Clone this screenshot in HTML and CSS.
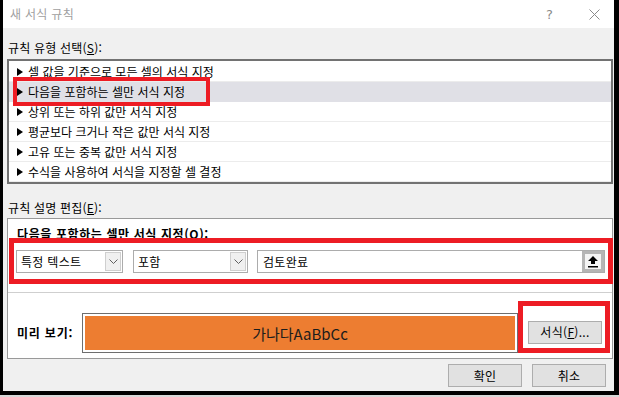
FILE: index.html
```html
<!DOCTYPE html>
<html lang="ko">
  <head>
    <meta charset="UTF-8" />
    <title>새 서식 규칙</title>
    <link rel="stylesheet" href="styles.css">
  </head>
  <body>
    <div class="dialog">
      <div class="titlebar">
        <span class="title">새 서식 규칙</span>
        <span class="help">?</span>
        <svg class="close" width="11" height="11" viewBox="0 0 11 11">
          <path d="M0.5 0.5 L10.5 10.5 M10.5 0.5 L0.5 10.5" stroke="#8a8a8a" stroke-width="1" fill="none" />
        </svg>
      </div>

      <div class="label first">규칙 유형 선택(<u>S</u>):</div>
      <ul class="rules">
        <li>셀 값을 기준으로 모든 셀의 서식 지정</li>
        <li class="selected">다음을 포함하는 셀만 서식 지정</li>
        <li>상위 또는 하위 값만 서식 지정</li>
        <li>평균보다 크거나 작은 값만 서식 지정</li>
        <li>고유 또는 중복 값만 서식 지정</li>
        <li>수식을 사용하여 서식을 지정할 셀 결정</li>
      </ul>

      <div class="label second">규칙 설명 편집(<u>E</u>):</div>
      <div class="panel">
        <div class="panel-title">다음을 포함하는 셀만 서식 지정(<u>O</u>):</div>
        <div class="controls">
          <div class="combo combo-type">
            <span class="combo-text">특정 텍스트</span>
            <span class="drop">
              <svg width="9" height="5" viewBox="0 0 9 5"><path d="M0.5 0.5 L4.5 4.5 L8.5 0.5" stroke="#606060" fill="none" /></svg>
            </span>
          </div>
          <div class="combo combo-op">
            <span class="combo-text">포함</span>
            <span class="drop">
              <svg width="9" height="5" viewBox="0 0 9 5"><path d="M0.5 0.5 L4.5 4.5 L8.5 0.5" stroke="#606060" fill="none" /></svg>
            </span>
          </div>
          <div class="textbox">
            <span class="combo-text">검토완료</span>
            <span class="pick">
              <svg width="12" height="12" viewBox="0 0 12 12">
                <path d="M6 0 L11 5 L8 5 L8 8 L4 8 L4 5 L1 5 Z" fill="#000" />
                <rect x="1" y="10" width="10" height="1.5" fill="#000" />
              </svg>
            </span>
          </div>
        </div>
        <div class="divider"></div>
        <div class="preview-row">
          <span class="preview-label">미리 보기:</span>
          <div class="preview">
            <div class="preview-fill">가나다AaBbCc</div>
          </div>
          <button class="btn format-btn">서식(<u>F</u>)...</button>
        </div>
      </div>

      <div class="footer">
        <button class="btn">확인</button>
        <button class="btn">취소</button>
      </div>

      <!-- annotation boxes -->
      <div class="mark mark-rule"></div>
      <div class="mark mark-controls"></div>
      <div class="mark mark-format"></div>
    </div>
    <div class="strip"></div>
  </body>
</html>
```

FILE: styles.css
```css
body {
  margin: 0;
  background-color: #000;
  font-family: "Noto Sans CJK KR", "Noto Sans", sans-serif;
  font-size: 12px;
  color: #000;
}
u {
  text-decoration: underline;
  text-underline-offset: 1px;
}
.dialog {
  position: relative;
  width: 611px;
  height: 391px;
  margin-left: 3px;
  background-color: #f0f0f0;
  overflow: hidden;
}
.titlebar {
  height: 28px;
  background-color: #fff;
  display: flex;
  align-items: center;
  padding: 0 14px 0 7px;
  color: #a0a0a0;
}
.title {
  line-height: 16px;
  letter-spacing: 0.3px;
}
.help {
  margin-left: auto;
  margin-right: 36px;
  color: #8a8a8a;
  font-family: "DejaVu Sans", sans-serif;
  font-size: 13px;
}
.label {
  padding-left: 5px;
  line-height: 16px;
  letter-spacing: 0.2px;
}
.label.first {
  margin-top: 12px;
  margin-bottom: 3px;
}
.label.second {
  margin-top: 16px;
  margin-bottom: 2px;
}
.rules {
  list-style: none;
  margin: 0 0 0 4px;
  padding: 1px 0 0 0;
  width: 606px;
  height: 125px;
  box-sizing: border-box;
  border: 2px solid #727272;
  background-color: #fff;
}
.rules li {
  height: 20px;
  box-sizing: border-box;
  border-bottom: 1px solid #ececec;
  display: flex;
  align-items: center;
  padding-left: 8px;
  line-height: 16px;
}
.rules li::before {
  content: "";
  width: 0;
  height: 0;
  border-left: 6px solid #000;
  border-top: 4px solid transparent;
  border-bottom: 4px solid transparent;
  margin-right: 5px;
}
.rules li.selected {
  background-color: #e0e0e6;
  border-bottom-color: #e0e0e6;
}
.panel {
  margin-left: 4px;
  width: 606px;
  height: 141px;
  box-sizing: border-box;
  border: 1px solid #999;
  background-color: #fff;
  padding: 7px 0 0 0;
}
.panel-title {
  font-weight: bold;
  line-height: 16px;
  padding-left: 9px;
  letter-spacing: 0.6px;
}
.controls {
  display: flex;
  gap: 10px;
  margin-top: 8px;
  padding-left: 8px;
}
.combo,
.textbox {
  height: 23px;
  box-sizing: border-box;
  border: 1px solid #acacac;
  background-color: #fff;
  display: flex;
  align-items: center;
}
.combo-type {
  width: 107px;
}
.combo-op {
  width: 115px;
}
.textbox {
  width: 348px;
  margin-left: -1px;
}
.combo-text {
  padding-left: 4px;
  line-height: 16px;
  flex: 1;
  letter-spacing: 0.3px;
}
.textbox .combo-text {
  padding-left: 5px;
}
.drop {
  width: 16px;
  height: 19px;
  box-sizing: border-box;
  margin-right: 1px;
  border: 1px solid #cfcfcf;
  background-color: #f0f0f0;
  display: flex;
  align-items: center;
  justify-content: center;
}
.pick {
  width: 22px;
  height: 21px;
  box-sizing: border-box;
  border: 3px solid #b5b5b5;
  background-color: #f4f4f4;
  display: flex;
  align-items: center;
  justify-content: center;
}
.divider {
  height: 1px;
  background-color: #cfcfcf;
  margin-top: 19px;
}
.preview-row {
  display: flex;
  align-items: center;
  margin-top: 20px;
  padding-left: 9px;
}
.preview-label {
  font-weight: bold;
  width: 65px;
  line-height: 16px;
  letter-spacing: 0.8px;
}
.preview {
  width: 436px;
  height: 40px;
  box-sizing: border-box;
  border: 1px solid #6e6e6e;
  padding: 2px;
  background-color: #fff;
}
.preview-fill {
  height: 100%;
  background-color: #ed7d31;
  display: flex;
  align-items: center;
  justify-content: center;
  font-size: 15px;
  color: #1c1c1c;
}
.btn {
  width: 74px;
  height: 23px;
  box-sizing: border-box;
  border: 1px solid #adadad;
  background-color: #e1e1e1;
  font-family: inherit;
  font-size: 12px;
  color: #000;
  padding: 0;
  line-height: 16px;
  letter-spacing: 0.3px;
}
.format-btn {
  margin-left: 10px;
  margin-top: -2px;
}
.footer {
  display: flex;
  justify-content: flex-end;
  gap: 10px;
  margin-top: 5px;
  padding-right: 8px;
}
.mark {
  position: absolute;
  border: 5px solid #ed1c24;
  box-sizing: border-box;
}
.mark-rule {
  left: 10px;
  top: 77px;
  width: 197px;
  height: 29px;
  border-width: 4px;
}
.mark-controls {
  left: 6px;
  top: 238px;
  width: 604px;
  height: 46px;
}
.mark-format {
  left: 515px;
  top: 301px;
  width: 92px;
  height: 52px;
}
.strip {
  height: 2px;
  margin-top: 4px;
  background-color: #d8d8d8;
}
```
